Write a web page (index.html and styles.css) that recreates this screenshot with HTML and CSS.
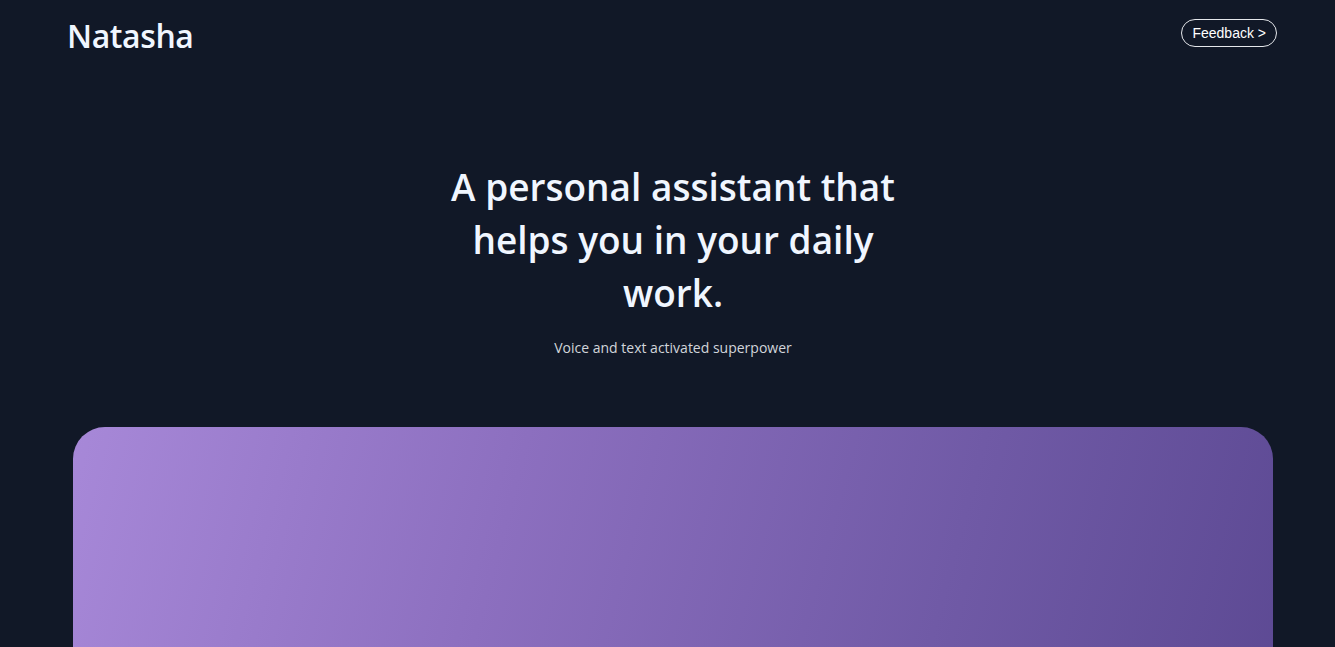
FILE: index.html
```html
<!DOCTYPE html>
<html lang="en">
<head>
<meta charset="utf-8">
<title>Natasha</title>
<link rel="stylesheet" href="styles.css">
</head>
<body>
<header class="header">
  <div class="logo">Natasha</div>
  <a class="feedback" href="#">Feedback &gt;</a>
</header>
<main class="hero">
  <h1 class="title">A personal assistant that helps you in your daily work.</h1>
  <p class="subtitle">Voice and text activated superpower</p>
</main>
<section class="card"></section>
</body>
</html>
```
FILE: styles.css
```css
html, body {
  margin: 0;
  padding: 0;
  background: #111827;
  color: #f0f6ff;
  overflow: hidden;
  height: 647px;
}
body {
  font-family: "Open Sans", "Noto Sans", sans-serif;
}
.header {
  display: flex;
  justify-content: space-between;
  align-items: flex-start;
  padding: 14px 58px 0 67px;
}
.logo {
  font-size: 32px;
  font-weight: 600;
  letter-spacing: -0.4px;
  line-height: 44px;
}
.feedback {
  margin-top: 5px;
  font-family: "Liberation Sans", Arial, sans-serif;
  font-size: 14px;
  color: #ffffff;
  text-decoration: none;
  border: 1px solid #e5e7eb;
  border-radius: 999px;
  padding: 5px 10px;
  line-height: 16px;
}
.hero {
  display: flex;
  flex-direction: column;
  align-items: center;
  padding: 102px 62px 0 73px;
}
.title {
  margin: 0;
  width: 470px;
  text-align: center;
  font-size: 37px;
  font-weight: 600;
  line-height: 53px;
}
.subtitle {
  margin: 19px 0 0;
  font-size: 14px;
  color: #d1d5db;
  line-height: 20px;
}
.card {
  margin: 69px 62px 0 73px;
  height: 400px;
  border-radius: 32px;
  background: linear-gradient(105deg, #a788d8 0%, #8c6fbf 35%, #705aa6 70%, #5b4892 100%);
}
```
